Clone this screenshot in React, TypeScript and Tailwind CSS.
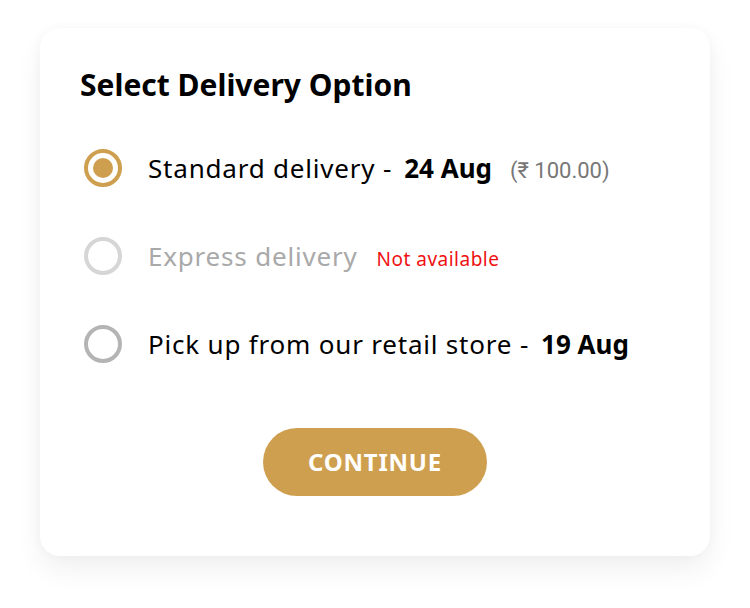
import { useState } from "react";

type Option = {
  id: string;
  label: string;
  date?: string;
  price?: string;
  disabled?: boolean;
};

const options: Option[] = [
  { id: "standard", label: "Standard delivery -", date: "24 Aug", price: "(₹ 100.00)" },
  { id: "express", label: "Express delivery", disabled: true },
  { id: "pickup", label: "Pick up from our retail store -", date: "19 Aug" },
];

function Radio({ checked, disabled }: { checked: boolean; disabled?: boolean }) {
  const ring = checked
    ? "border-[#cf9f50]"
    : disabled
      ? "border-[#d6d6d6]"
      : "border-[#b4b4b4]";
  return (
    <span
      className={`flex h-[38px] w-[38px] shrink-0 items-center justify-center rounded-full border-[4px] ${ring}`}
    >
      {checked && <span className="h-[20px] w-[20px] rounded-full bg-[#cf9f50]" />}
    </span>
  );
}

export default function App() {
  const [selected, setSelected] = useState("standard");

  return (
    <div className="min-h-[608px] bg-white pt-[28px] font-['Noto_Sans',sans-serif]">
      <div className="mx-auto w-[670px] rounded-[20px] bg-white px-10 pb-[60px] pt-[37px] shadow-[0_14px_28px_rgba(0,0,0,0.06),0_0_12px_rgba(0,0,0,0.03)]">
        <h2 className="text-[30px] font-bold leading-[40px] text-black">Select Delivery Option</h2>

        <div className="mt-[19px] flex flex-col">
          {options.map((o) => (
            <button
              key={o.id}
              disabled={o.disabled}
              onClick={() => setSelected(o.id)}
              className="flex h-[88px] items-center gap-[26px] pl-[4px] text-left"
            >
              <Radio checked={selected === o.id} disabled={o.disabled} />
              <span className="flex items-baseline">
                <span
                  className={`text-[26px] tracking-[0.8px] ${o.disabled ? "text-[#a9a9a9]" : "text-black"}`}
                >
                  {o.label}
                </span>
                {o.date && (
                  <span className="ml-[12px] text-[26px] font-bold text-black">{o.date}</span>
                )}
                {o.price && (
                  <span className="ml-[18px] font-['Roboto',sans-serif] text-[22px] text-[#777]">
                    {o.price}
                  </span>
                )}
                {o.disabled && (
                  <span className="ml-[19px] text-[19px] tracking-[0.5px] text-[#ee1111]">
                    Not available
                  </span>
                )}
              </span>
            </button>
          ))}
        </div>

        <div className="mt-[40px] flex justify-center">
          <button className="h-[68px] w-[224px] rounded-full bg-[#cf9f50] text-[24px] font-bold tracking-[0.8px] text-white">
            CONTINUE
          </button>
        </div>
      </div>
    </div>
  );
}
